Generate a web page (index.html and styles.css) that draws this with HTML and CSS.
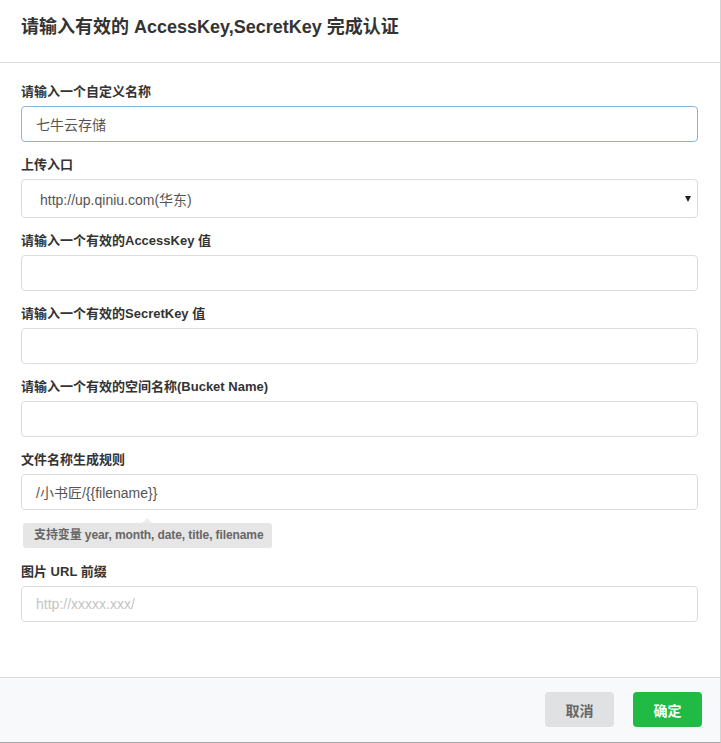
FILE: index.html
```html
<!DOCTYPE html>
<html lang="zh-CN">
<head>
<meta charset="utf-8">
<title>AccessKey</title>
<link rel="stylesheet" href="styles.css">
</head>
<body>
<div class="modal">
  <div class="header">请输入有效的 AccessKey,SecretKey 完成认证</div>
  <div class="content">
    <div class="field">
      <label class="label">请输入一个自定义名称</label>
      <input class="input focus" type="text" value="七牛云存储">
    </div>
    <div class="field">
      <label class="label">上传入口</label>
      <div class="select"><span>http://up.qiniu.com(华东)</span><i class="caret"></i></div>
    </div>
    <div class="field">
      <label class="label">请输入一个有效的AccessKey 值</label>
      <input class="input" type="text">
    </div>
    <div class="field">
      <label class="label">请输入一个有效的SecretKey 值</label>
      <input class="input" type="text">
    </div>
    <div class="field">
      <label class="label">请输入一个有效的空间名称(Bucket Name)</label>
      <input class="input" type="text">
    </div>
    <div class="field tight">
      <label class="label">文件名称生成规则</label>
      <input class="input" type="text" value="/小书匠/{{filename}}">
    </div>
    <div class="hint">支持变量 year, month, date, title, filename</div>
    <div class="field">
      <label class="label">图片 URL 前缀</label>
      <input class="input" type="text" placeholder="http://xxxxx.xxx/">
    </div>
  </div>
  <div class="actions">
    <button class="btn cancel">取消</button>
    <button class="btn ok">确定</button>
  </div>
</div>
</body>
</html>
```
FILE: styles.css
```css
html, body {
  margin: 0;
  padding: 0;
  background: #fff;
}
body {
  font-family: "Liberation Sans", "Noto Sans CJK SC", sans-serif;
  color: #333;
}
.modal {
  width: 720px;
  height: 742px;
  border-right: 1px solid #d4d4d5;
  border-bottom: 1px solid #a8a8a8;
  display: flex;
  flex-direction: column;
  background: #fff;
}
.header {
  height: 63px;
  box-sizing: border-box;
  border-bottom: 1px solid #dedede;
  padding: 0 21px;
  line-height: 54px;
  font-size: 18px;
  font-weight: bold;
  color: #333;
}
.content {
  flex: 1;
  padding: 21px 22px 0 21px;
}
.field {
  margin-bottom: 15px;
}
.field.tight {
  margin-bottom: 0;
}
.label {
  display: block;
  font-size: 13px;
  font-weight: bold;
  line-height: 16px;
  margin-bottom: 6px;
  color: #333;
}
.input {
  display: block;
  width: 100%;
  height: 36px;
  box-sizing: border-box;
  border: 1px solid #dcdcdd;
  border-radius: 4px;
  padding: 0 14px;
  font-family: "Liberation Sans", "Noto Sans CJK SC", sans-serif;
  font-size: 14px;
  color: #555;
  outline: none;
  background: #fff;
}
.input.focus {
  border-color: #85b7d9;
}
.input::placeholder {
  color: #c4c4c4;
}
.select {
  display: flex;
  align-items: center;
  height: 39px;
  box-sizing: border-box;
  border: 1px solid #dcdcdd;
  border-radius: 4px;
  padding: 0 6px 0 18px;
  font-size: 14px;
  color: #555;
}
.caret {
  margin-left: auto;
  width: 0;
  height: 0;
  border-left: 3px solid transparent;
  border-right: 3px solid transparent;
  border-top: 6px solid #222;
  margin-top: 1px;
}
.hint {
  position: relative;
  display: inline-block;
  margin: 13px 0 16px 2px;
  padding: 0 8px 0 11px;
  height: 25px;
  line-height: 25px;
  background: #e6e6e6;
  border-radius: 3px;
  font-size: 12px;
  font-weight: bold;
  letter-spacing: -0.1px;
  color: #666;
}
.hint::before {
  content: "";
  position: absolute;
  top: -5px;
  left: 50%;
  margin-left: -5px;
  border-left: 5px solid transparent;
  border-right: 5px solid transparent;
  border-bottom: 5px solid #ececec;
}
.actions {
  height: 65px;
  box-sizing: border-box;
  border-top: 1px solid #dadadb;
  background: #f8f9fb;
  display: flex;
  justify-content: flex-end;
  align-items: flex-start;
  gap: 19px;
  padding: 14px 18px 0 0;
}
.btn {
  width: 69px;
  height: 35px;
  border: none;
  border-radius: 4px;
  font-family: "Liberation Sans", "Noto Sans CJK SC", sans-serif;
  font-size: 14px;
  font-weight: bold;
  cursor: pointer;
}
.cancel {
  background: #e0e1e2;
  color: #666;
}
.ok {
  background: #21ba45;
  color: #fff;
}
```
